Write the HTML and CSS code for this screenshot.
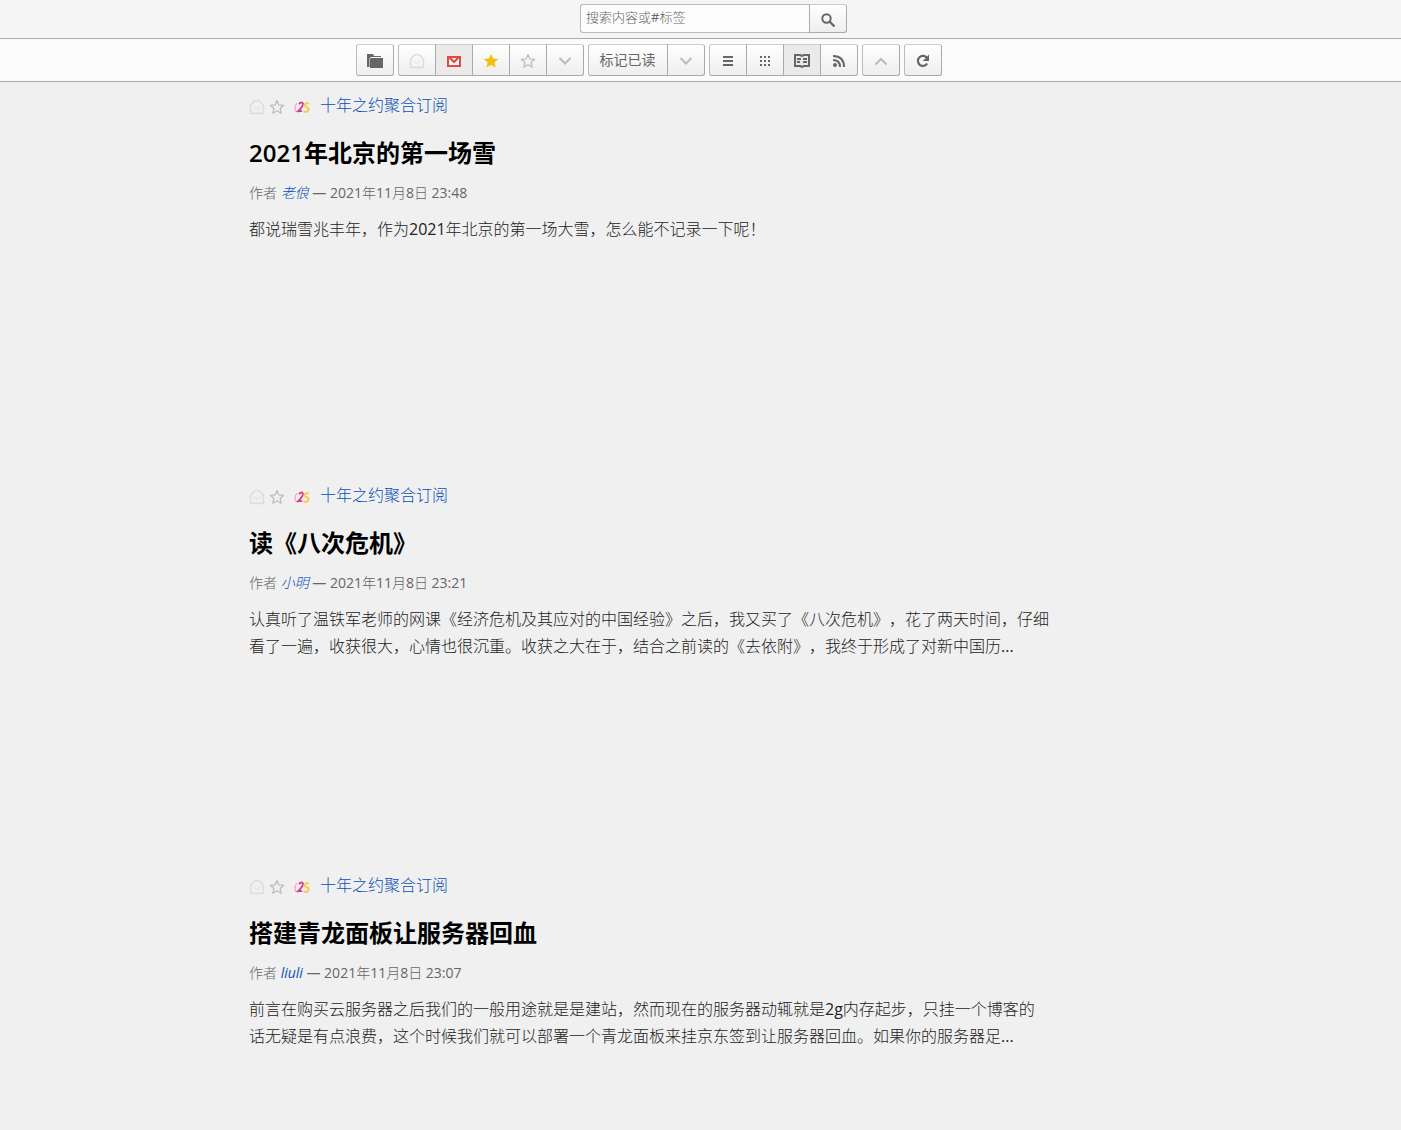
FILE: index.html
```html
<!DOCTYPE html>
<html lang="zh-CN">
<head>
<meta charset="utf-8">
<meta name="viewport" content="width=device-width, initial-scale=1">
<title>十年之约聚合订阅</title>
<link rel="stylesheet" href="styles.css">
</head>
<body>
<svg class="sprite" aria-hidden="true">
  <symbol id="read" viewBox="0 0 16 16"><path d="M1.6 14.4V6.2L5 2.6Q8 .4 11 2.6l3.4 3.6v8.2z" fill="none" stroke="currentColor" stroke-width="1.6" stroke-linejoin="round"/><path d="M4.5 7.5 8 10.5l3.500-3" fill="none" stroke="currentColor" stroke-width="1.200" opacity=".6"/></symbol>
  <symbol id="star-line" viewBox="0 0 16 16"><path d="m8 1.500 1.900 4.400 4.800.4-3.600 3.200 1.100 4.700L8 11.700l-4.200 2.500 1.100-4.700L1.300 6.300l4.800-.4z" fill="none" stroke="currentColor" stroke-width="1.200" stroke-linejoin="round"/></symbol>
  <symbol id="down" viewBox="0 0 16 16"><path d="m2.500 5 5.500 5.500L13.500 5" fill="none" stroke="currentColor" stroke-width="2"/></symbol>
  <symbol id="logo" viewBox="0 0 16 16"><path d="M3 4Q-.5 9 2 12.500L5 13" fill="none" stroke="#f3a3cc" stroke-width="1.300"/><path d="M5 5q3-3 4-.5Q9.300 7 4.200 12.200h4" fill="none" stroke="#dc3a88" stroke-width="1.800"/><path d="M15 4.500c-4-1-5.500 1.500-3.500 3s4 1.500 3 3.700-3.500 1.800-5 1.300" fill="none" stroke="#f6cc55" stroke-width="2"/></symbol>
</svg>

<header class="header">
  <form class="search">
    <input class="search-input" type="search" aria-label="搜索内容或#标签" placeholder="搜索内容或#标签">
    <button class="btn search-btn" type="button" aria-label="搜索"><svg class="icon" viewBox="0 0 16 16"><circle cx="6.500" cy="6.500" r="4.200" fill="none" stroke="currentColor" stroke-width="2"/><path d="m9.500 9.500 5 5" stroke="currentColor" stroke-width="2.400"/></svg></button>
  </form>
</header>

<nav class="toolbar" aria-label="工具栏">
  <div class="group">
    <button class="btn" type="button" aria-label="订阅源"><svg class="icon" viewBox="0 0 16 16"><path d="M0 1h6l1 2h7v1H4L2.500 5.500V14H0z" fill="currentColor"/><path d="M4 5h12v10H3V6z" fill="currentColor"/></svg></button>
  </div>
  <div class="group">
    <button class="btn faint" type="button" aria-label="显示已读"><svg class="icon"><use href="#read"/></svg></button>
    <button class="btn active" type="button" aria-label="显示未读" aria-pressed="true"><svg class="icon" viewBox="0 0 16 16"><path d="M2 4h12v9H2z" fill="#fff5f4" stroke="#dc4a40" stroke-width="2"/><path d="m3 4 5 5 5-5" fill="none" stroke="#dc4a40" stroke-width="2"/></svg></button>
    <button class="btn" type="button" aria-label="显示收藏"><svg class="icon" viewBox="0 0 16 16"><path d="m8 1 2.100 4.600 5.100.5-3.800 3.400 1.100 5L8 12l-4.500 2.500 1.100-5L.8 6.100l5.100-.5z" fill="#f2be12"/></svg></button>
    <button class="btn pale" type="button" aria-label="显示未收藏"><svg class="icon"><use href="#star-line"/></svg></button>
    <button class="btn pale" type="button" aria-label="更多筛选"><svg class="icon"><use href="#down"/></svg></button>
  </div>
  <div class="group">
    <button class="btn btn-text" type="button">标记已读</button>
    <button class="btn pale" type="button" aria-label="标记选项"><svg class="icon"><use href="#down"/></svg></button>
  </div>
  <div class="group">
    <button class="btn" type="button" aria-label="普通视图"><svg class="icon" viewBox="0 0 16 16"><path d="M3 4h10M3 8h10M3 12h10" stroke="currentColor" stroke-width="2"/></svg></button>
    <button class="btn" type="button" aria-label="全局视图"><svg class="icon" viewBox="0 0 16 16"><path d="M3 4h10M3 8h10M3 12h10" stroke="currentColor" stroke-width="2" stroke-dasharray="2 2"/></svg></button>
    <button class="btn active" type="button" aria-label="阅读视图" aria-pressed="true"><svg class="icon" viewBox="0 0 16 16"><path d="M1 2h5l2 1 2-1h5v11h-5l-2 1-2-1H1z" fill="none" stroke="currentColor" stroke-width="2"/><path d="M3 6h4M9 6h4M3 9h3M9 9h4" stroke="currentColor" stroke-width="2"/></svg></button>
    <button class="btn" type="button" aria-label="RSS 视图"><svg class="icon" viewBox="0 0 16 16"><circle cx="4" cy="12" r="2" fill="currentColor"/><path d="M2 7q7 0 7 7M2 3q11 0 11 11" fill="none" stroke="currentColor" stroke-width="2"/></svg></button>
  </div>
  <div class="group">
    <button class="btn pale" type="button" aria-label="升序"><svg class="icon" viewBox="0 0 16 16"><path d="m2.500 11.500 5.500-5.500 5.500 5.500" fill="none" stroke="currentColor" stroke-width="2"/></svg></button>
  </div>
  <div class="group">
    <button class="btn" type="button" aria-label="刷新"><svg class="icon" viewBox="0 0 16 16"><path d="M12 5A5 5 0 1 0 12.200 10.500" fill="none" stroke="currentColor" stroke-width="2.200"/><path d="M14 1.500V8H7.500l3-2.500z" fill="currentColor"/></svg></button>
  </div>
</nav>

<main class="stream">
  <article class="post">
    <div class="feed">
      <button class="mark faint" type="button" aria-label="标记为已读"><svg class="icon"><use href="#read"/></svg></button>
      <button class="mark pale" type="button" aria-label="收藏"><svg class="icon"><use href="#star-line"/></svg></button>
      <a class="feed-link" href="#"><svg class="icon"><use href="#logo"/></svg><span>十年之约聚合订阅</span></a>
    </div>
    <h1 class="title"><a href="#">2021年北京的第一场雪</a></h1>
    <p class="meta">作者 <a class="author" href="#">老俍</a> — 2021年11月8日 23:48</p>
    <p class="text">都说瑞雪兆丰年，作为2021年北京的第一场大雪，怎么能不记录一下呢！</p>
  </article>
  <article class="post">
    <div class="feed">
      <button class="mark faint" type="button" aria-label="标记为已读"><svg class="icon"><use href="#read"/></svg></button>
      <button class="mark pale" type="button" aria-label="收藏"><svg class="icon"><use href="#star-line"/></svg></button>
      <a class="feed-link" href="#"><svg class="icon"><use href="#logo"/></svg><span>十年之约聚合订阅</span></a>
    </div>
    <h1 class="title"><a href="#">读《八次危机》</a></h1>
    <p class="meta">作者 <a class="author" href="#">小明</a> — 2021年11月8日 23:21</p>
    <p class="text">认真听了温铁军老师的网课《经济危机及其应对的中国经验》之后，我又买了《八次危机》，花了两天时间，仔细看了一遍，收获很大，心情也很沉重。收获之大在于，结合之前读的《去依附》，我终于形成了对新中国历...</p>
  </article>
  <article class="post">
    <div class="feed">
      <button class="mark faint" type="button" aria-label="标记为已读"><svg class="icon"><use href="#read"/></svg></button>
      <button class="mark pale" type="button" aria-label="收藏"><svg class="icon"><use href="#star-line"/></svg></button>
      <a class="feed-link" href="#"><svg class="icon"><use href="#logo"/></svg><span>十年之约聚合订阅</span></a>
    </div>
    <h1 class="title"><a href="#">搭建青龙面板让服务器回血</a></h1>
    <p class="meta">作者 <a class="author" href="#">liuli</a> — 2021年11月8日 23:07</p>
    <p class="text">前言在购买云服务器之后我们的一般用途就是是建站，然而现在的服务器动辄就是2g内存起步，只挂一个博客的话无疑是有点浪费，这个时候我们就可以部署一个青龙面板来挂京东签到让服务器回血。如果你的服务器足...</p>
  </article>
</main>
</body>
</html>
```
FILE: styles.css
```css
* { box-sizing: border-box; }

body {
  margin: 0;
  background: #f0f0f0;
  color: #222;
  font-family: "Open Sans", "Noto Sans CJK SC Light", "Noto Sans CJK SC", sans-serif;
  font-size: 16px;
  text-spacing-trim: space-all;
}

button, input { font: inherit; color: inherit; }
a { color: #0b50b0; text-decoration: none; }
.sprite { display: none; }
.icon { display: block; width: 16px; height: 16px; flex: none; }

.header {
  display: flex;
  justify-content: center;
  padding: 4px 0 5px 26px;
  background: #f5f5f5;
  border-bottom: 1px solid #aaa;
}

.search { display: flex; height: 29px; }
.search-input {
  width: 229px;
  padding: 0 5px 3px;
  border: 1px solid #bbb;
  border-right: 0;
  border-radius: 3px 0 0 3px;
  background: #fdfdfd;
  font-size: 13px;
  appearance: none;
  outline: 0;
}
.search-input::placeholder { color: #666; opacity: 1; }
.search .search-btn { height: 29px; padding-top: 2px; border-radius: 0 3px 3px 0; }

.toolbar {
  display: flex;
  flex-wrap: wrap;
  justify-content: center;
  gap: 4px;
  padding: 5px 103px 5px 0;
  background: #fbfbfb;
  border-bottom: 1px solid #aaa;
}
.group { display: flex; }

.btn {
  display: flex;
  align-items: center;
  justify-content: center;
  width: 38px;
  height: 32px;
  padding: 0 1px 0 0;
  border: 1px solid #aaa;
  border-top-color: #ccc;
  background: linear-gradient(#fff, #eee);
  color: #666;
}
.group .btn + .btn { margin-left: -1px; }
.group .btn:first-child { border-left-color: #bbb; border-top-left-radius: 3px; border-bottom-left-radius: 3px; }
.group .btn:last-child { border-top-right-radius: 3px; border-bottom-right-radius: 3px; }
.group .icon { margin-top: 1px; }
.group .active { background: #eaeaea; }
.group .btn-text { width: 80px; padding: 0 1px 2px 0; font-family: "Open Sans", "Noto Sans CJK SC", sans-serif; font-size: 14px; }
.btn.pale, .mark.pale { color: #bbb; }
.btn.faint, .mark.faint { color: #ddd; }

.stream { padding-right: 103px; }
.post {
  max-width: 800px;
  min-height: 390px;
  margin: 0 auto;
  padding-top: 11px;
}
.post:last-child { min-height: 0; }
.feed { display: flex; align-items: center; gap: 4px; height: 24px; }
.mark { padding: 3px 0 0; border: 0; background: none; }
.feed-link { display: flex; align-items: center; gap: 10px; margin-left: 5px; line-height: 24px; }
.feed-link .icon { margin-top: 3px; }
.title {
  margin: 18px 0 10px;
  font-family: "Open Sans", "Noto Sans CJK SC", sans-serif;
  font-size: 24px;
  font-weight: 600;
  line-height: 36px;
}
.title a { color: #000; }
.meta { margin: 0; color: #666; font-size: 14px; line-height: 24px; }
.author { font-style: italic; }
.text { margin: 11px 0 0; line-height: 27px; }
```
